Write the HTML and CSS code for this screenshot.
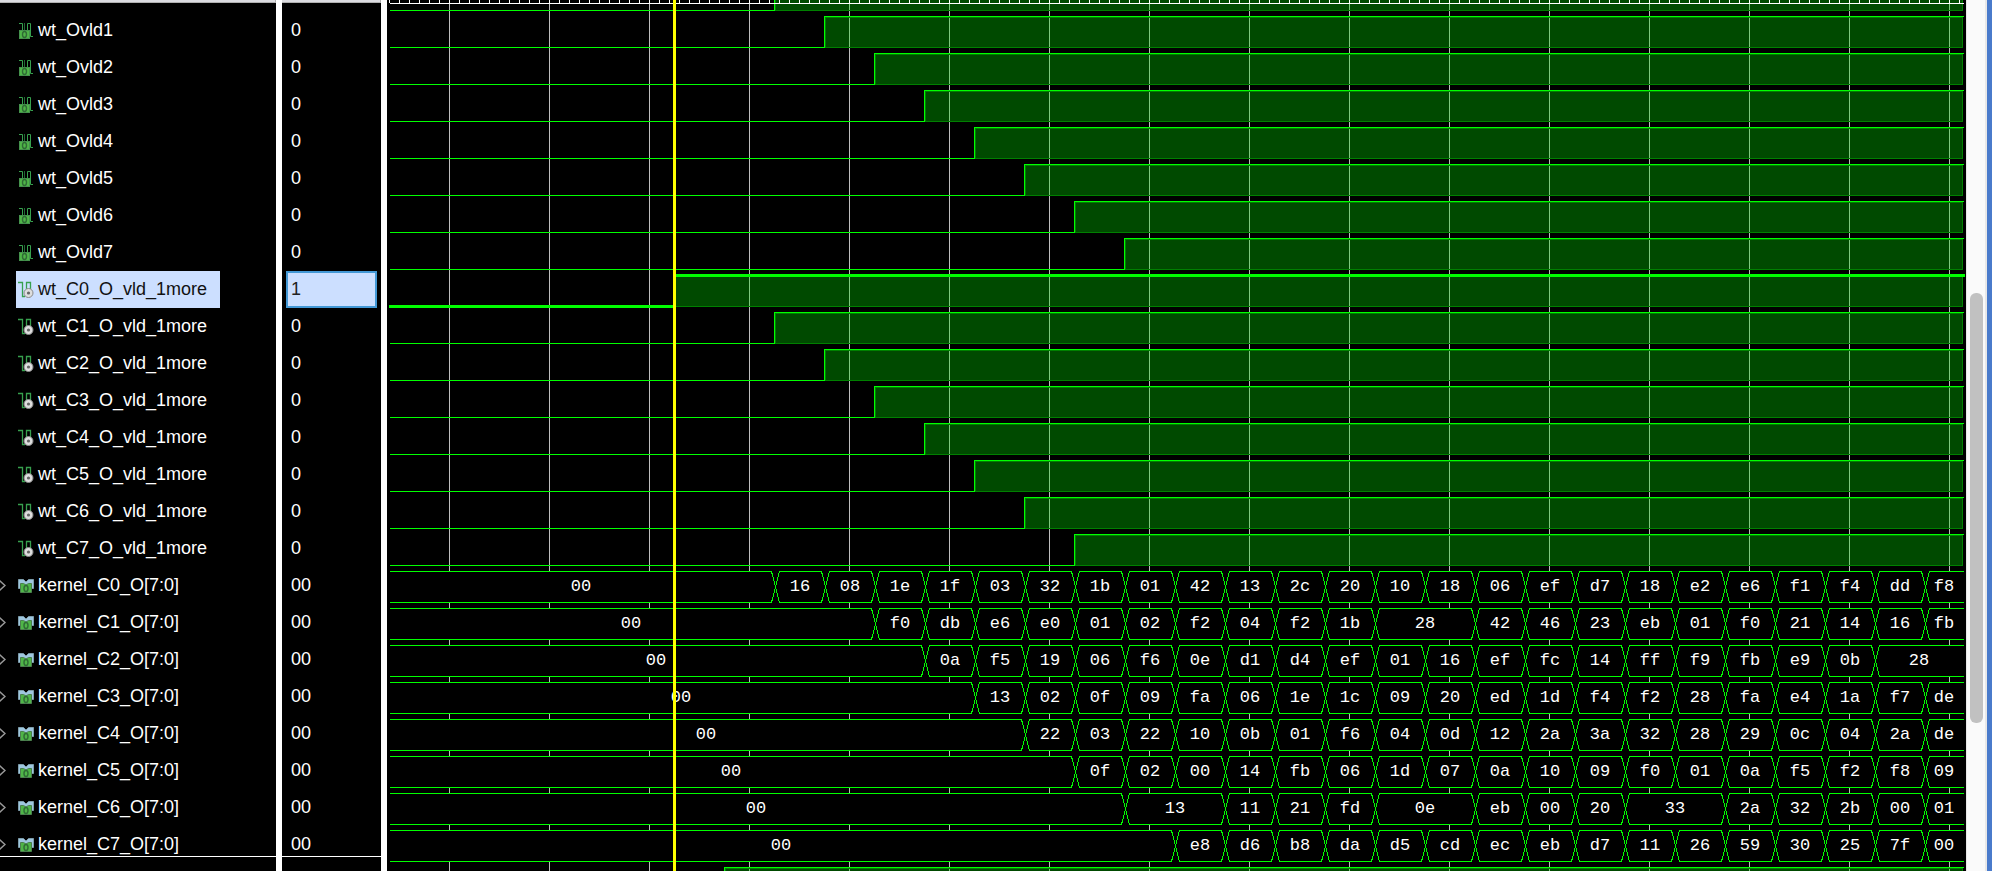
FILE: index.html
```html
<!DOCTYPE html>
<html lang="en">
<head>
<meta charset="utf-8">
<title>Waveform viewer</title>
<link rel="stylesheet" href="styles.css">
</head>
<body>
<svg class="defs" aria-hidden="true">
  <symbol id="i-scalar" viewBox="0 0 16 18">
    <path d="M1 1.500h3.500V9M6.500 9V1.500M9.500 9V1.500h3V14.500H15" fill="none" stroke="#37a04e"/>
    <path d="M6.500 1v7" stroke="#1f6a33" fill="none"/>
    <rect x="1.500" y="8.500" width="10" height="8" fill="#4fb548" stroke="#45924d"/>
    <ellipse cx="6.500" cy="12.500" rx="2" ry="3" fill="none" stroke="#2f6a35" stroke-width="1.400"/>
  </symbol>
  <symbol id="i-reg" viewBox="0 0 16 18">
    <path d="M0 1.500h4.500V15.500H7M8.500 8V1.500h4V9" fill="none" stroke="#37a04e" stroke-width="1.300"/>
    <circle cx="10.500" cy="12" r="4.500" fill="#dedede" stroke="#8a8a8a"/>
    <circle cx="10.500" cy="12" r="1.600" fill="#666"/>
  </symbol>
  <symbol id="i-bus" viewBox="0 0 16 18">
    <path d="M.5 2.500h5L8 5l2.500-2.500h5v9h-15z" fill="#9ec6df" stroke="#7d9dab"/>
    <path d="M2.500 6.500h3L8 8l2.500-1.500h3v9h-11z" fill="#4fb548" stroke="#4b7f4e"/>
    <ellipse cx="8" cy="11.500" rx="2" ry="3" fill="none" stroke="#2f6a35" stroke-width="1.400"/>
  </symbol>
</svg>
<main class="viewer">
  <section class="pane names" aria-label="Signal names"><div class="head"></div><ul class="rows" id="names"></ul></section>
  <section class="pane values" aria-label="Signal values"><div class="head"></div><ul class="rows" id="values"></ul></section>
  <section class="wave" aria-label="Waveforms"><svg id="wave" class="plot"></svg></section>
  <div class="scroll"><span class="before"></span><span class="thumb"></span><span class="after"></span></div>
  <div class="edge"></div>
</main>
<script src="wave.js"></script>
</body>
</html>
```
FILE: styles.css
```css
* { box-sizing: border-box; }
body { margin: 0; background: #fff; font-family: "Liberation Sans", Arial, sans-serif; font-size: 18px; color: #fff; }
.defs { position: absolute; width: 0; height: 0; }
.viewer { display: flex; height: 100vh; overflow: hidden; padding-right: 13px; }
.pane { position: relative; flex: none; background: #000; margin-right: 6px; overflow: hidden; }
.names { width: 276px; }
.values { width: 99px; }
.pane::after { content: ""; position: absolute; left: 0; right: 0; bottom: 14px; height: 1px; background: #fff; }
.head { height: 3px; background: #dcdce0; border-bottom: 1px solid #b0b0b0; border-right: 1px solid #b0b0b0; }
.rows { list-style: none; margin: 0; padding: 9px 0 0; }
.rows li { height: 37px; line-height: 37px; white-space: nowrap; display: flex; }
.names li { padding-left: 16px; position: relative; }
.label { display: flex; align-items: center; gap: 4px; padding: 0 13px 0 2px; }
.label svg { width: 16px; height: 18px; flex: none; }
.values li { margin: 0 4px; padding-left: 5px; }
.selected .label { background: #ccdfff; color: #111; }
.values .selected { background: #ccdfff; color: #222; border: 2px solid #4398d5; padding-left: 3px; line-height: 33px; }
.expand { position: absolute; left: 0; top: 12px; width: 6px; height: 13px; padding: 0; border: 0; background: none; display: flex; }
.expand svg { width: 6px; height: 13px; }
.wave { flex: 1; min-width: 0; background: #000; }
.plot { display: block; width: 100%; height: 100%; shape-rendering: crispEdges; }
.grid { stroke: #bebebe; }
.ruler { stroke: #fff; }
.line { fill: none; stroke: #0f0; }
.thick { stroke-width: 3; }
.fill { fill: rgba(0, 225, 0, .33); stroke: #008000; }
.bus { fill: #000; stroke: #0f0; }
.cursor { stroke: #ff0; stroke-width: 3; }
.hex { fill: #fff; font: 17px "Liberation Mono", monospace; text-anchor: middle; }
.scroll { width: 21px; flex: none; display: flex; flex-direction: column; align-items: center; background: #fafafa; border: solid #e8e8e8; border-width: 0 2px 0 1px; }
.before { flex: 293; }
.thumb { flex: 430; width: 13px; border-radius: 6px; background: #c1c1c1; }
.after { flex: 148; }
.edge { width: 5px; flex: none; background: #4a7bcb; }
```
FILE: wave.js
```js
const PITCH = 37, TOP = 12, STEP = 50;
const signals = [];
for (let i = 1; i <= 7; i++) signals.push({ name: 'wt_Ovld' + i, icon: 'scalar', value: '0', rise: 437 + (i - 1) * STEP });
for (let i = 0; i <= 7; i++) signals.push({
  name: 'wt_C' + i + '_O_vld_1more', icon: 'reg', value: i ? '0' : '1',
  rise: i ? 387 + (i - 1) * STEP : 287, selected: i === 0
});
const buses = [
  [388, '16 08 1e 1f 03 32 1b 01 42 13 2c 20 10 18 06 ef d7 18 e2 e6 f1 f4 dd f8'],
  [488, 'f0 db e6 e0 01 02 f2 04 f2 1b 28*2 42 46 23 eb 01 f0 21 14 16 fb'],
  [538, '0a f5 19 06 f6 0e d1 d4 ef 01 16 ef fc 14 ff f9 fb e9 0b 28*2'],
  [588, '13 02 0f 09 fa 06 1e 1c 09 20 ed 1d f4 f2 28 fa e4 1a f7 de'],
  [638, '22 03 22 10 0b 01 f6 04 0d 12 2a 3a 32 28 29 0c 04 2a de'],
  [688, '0f 02 00 14 fb 06 1d 07 0a 10 09 f0 01 0a f5 f2 f8 09'],
  [738, '13*2 11 21 fd 0e*2 eb 00 20 33*2 2a 32 2b 00 01'],
  [788, 'e8 d6 b8 da d5 cd ec eb d7 11 26 59 30 25 7f 00']
];
buses.forEach(([start, data], i) => signals.push({ name: 'kernel_C' + i + '_O[7:0]', icon: 'bus', value: '00', start, data }));

const chevron = '<button class="expand" aria-label="Expand"><svg viewBox="0 0 6 13"><path d="M-1 1L5 6.500L-1 12" fill="none" stroke="#999" stroke-width="1.5"/></svg></button>';
document.getElementById('names').innerHTML = signals.map(s =>
  `<li class="${s.selected ? 'selected' : ''}">${s.data ? chevron : ''}<span class="label"><svg><use href="#i-${s.icon}"/></svg>${s.name}</span></li>`).join('');
document.getElementById('values').innerHTML = signals.map(s =>
  `<li class="${s.selected ? 'selected' : ''}">${s.value}</li>`).join('');

const svg = document.getElementById('wave');
const path = (cls, d) => `<path class="${cls}" d="${d}"/>`;

function level(y, rise, right, selected) {
  const hi = y + 4.5, lo = y + 35.5, x = rise + .5;
  return `<rect class="fill" x="${x + 1}" y="${hi + 1}" width="${right - x - 2.5}" height="30"/>` +
    path(selected ? 'line thick' : 'line', `M${selected ? 2 : 3} ${lo}H${x}V${hi}H${right + (selected ? 1 : 0)}`);
}

function bus(y, s, right) {
  const hi = y + 4.5, mid = y + 20, lo = y + 35.5;
  const cells = [[0, s.start + .5, '00']];
  let x = s.start + .5;
  for (const token of s.data.split(' ')) {
    const [text, count] = token.split('*');
    const end = x + STEP * (count || 1);
    cells.push([x, end, text]);
    x = end;
  }
  return cells.filter(c => c[0] < right).map(([a, b, text], i) => {
    const e = Math.min(b, right);
    const d = b >= right ? `M${right} ${lo}H${a + 4}L${a} ${mid}L${a + 4} ${hi}H${right}`
      : i ? `M${a + 4} ${lo}L${a} ${mid}L${a + 4} ${hi}H${b - 4}L${b} ${mid}L${b - 4} ${lo}Z`
      : `M3 ${hi}H${b - 4}L${b} ${mid}L${b - 4} ${lo}H3`;
    return path('bus', d) + `<text class="hex" x="${Math.floor((a + e) / 2)}" y="${y + 24}">${text}</text>`;
  }).join('');
}

function draw() {
  const w = svg.clientWidth, h = svg.clientHeight, right = w - 2;
  let out = '', ticks = '', grid = '';
  for (let x = 2.5; x < right; x += 10) ticks += `M${x} 0V3`;
  for (let x = 62.5; x < right; x += 100) grid += `M${x} 4V${h}`;
  out += path('grid', grid);
  out += level(TOP - PITCH, 387, right);
  signals.forEach((s, i) => {
    const y = TOP + i * PITCH;
    out += s.data ? bus(y, s, right) : level(y, s.rise, right, s.selected);
  });
  out += level(TOP + signals.length * PITCH, 337, right);
  out += path('ruler', `M3 3.500H${right}${ticks}`);
  out += path('cursor', `M287.500 0V${h}`);
  svg.innerHTML = out;
}
draw();
addEventListener('resize', draw);
```
